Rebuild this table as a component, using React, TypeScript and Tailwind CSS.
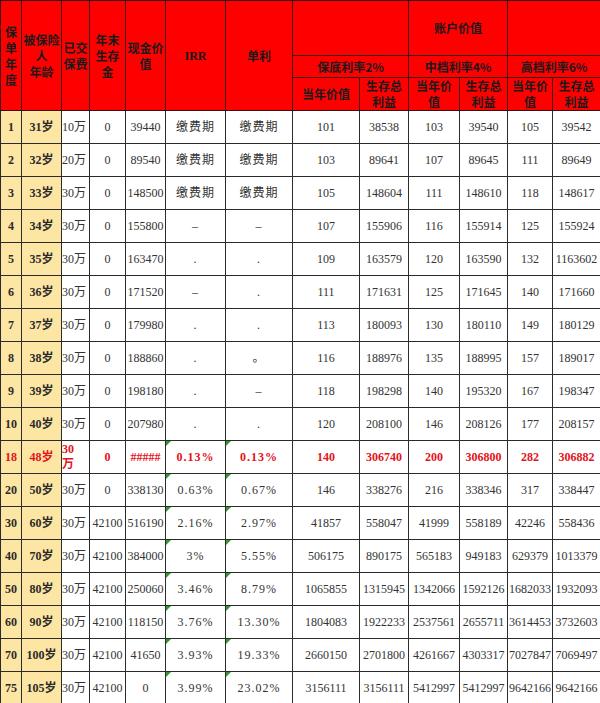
// App.tsx - 保单利益演示表

type Row = {
    year: string;
    age: string;
    paid: string;
    survival: string;
    cash: string;
    irr: string;
    simple: string;
    vals: string[];
    hot?: boolean;
    flag?: boolean;
};

const rows: Row[] = [
    { year: '1', age: '31岁', paid: '10万', survival: '0', cash: '39440', irr: '缴费期', simple: '缴费期', vals: ['101', '38538', '103', '39540', '105', '39542'] },
    { year: '2', age: '32岁', paid: '20万', survival: '0', cash: '89540', irr: '缴费期', simple: '缴费期', vals: ['103', '89641', '107', '89645', '111', '89649'] },
    { year: '3', age: '33岁', paid: '30万', survival: '0', cash: '148500', irr: '缴费期', simple: '缴费期', vals: ['105', '148604', '111', '148610', '118', '148617'] },
    { year: '4', age: '34岁', paid: '30万', survival: '0', cash: '155800', irr: '–', simple: '–', vals: ['107', '155906', '116', '155914', '125', '155924'] },
    { year: '5', age: '35岁', paid: '30万', survival: '0', cash: '163470', irr: '.', simple: '.', vals: ['109', '163579', '120', '163590', '132', '1163602'] },
    { year: '6', age: '36岁', paid: '30万', survival: '0', cash: '171520', irr: '–', simple: '.', vals: ['111', '171631', '125', '171645', '140', '171660'] },
    { year: '7', age: '37岁', paid: '30万', survival: '0', cash: '179980', irr: '.', simple: '.', vals: ['113', '180093', '130', '180110', '149', '180129'] },
    { year: '8', age: '38岁', paid: '30万', survival: '0', cash: '188860', irr: '.', simple: '。', vals: ['116', '188976', '135', '188995', '157', '189017'] },
    { year: '9', age: '39岁', paid: '30万', survival: '0', cash: '198180', irr: '.', simple: '–', vals: ['118', '198298', '140', '195320', '167', '198347'] },
    { year: '10', age: '40岁', paid: '30万', survival: '0', cash: '207980', irr: '.', simple: '.', vals: ['120', '208100', '146', '208126', '177', '208157'] },
    { year: '18', age: '48岁', paid: '30万', survival: '0', cash: '#####', irr: '0.13%', simple: '0.13%', vals: ['140', '306740', '200', '306800', '282', '306882'], hot: true, flag: true },
    { year: '20', age: '50岁', paid: '30万', survival: '0', cash: '338130', irr: '0.63%', simple: '0.67%', vals: ['146', '338276', '216', '338346', '317', '338447'], flag: true },
    { year: '30', age: '60岁', paid: '30万', survival: '42100', cash: '516190', irr: '2.16%', simple: '2.97%', vals: ['41857', '558047', '41999', '558189', '42246', '558436'], flag: true },
    { year: '40', age: '70岁', paid: '30万', survival: '42100', cash: '384000', irr: '3%', simple: '5.55%', vals: ['506175', '890175', '565183', '949183', '629379', '1013379'], flag: true },
    { year: '50', age: '80岁', paid: '30万', survival: '42100', cash: '250060', irr: '3.46%', simple: '8.79%', vals: ['1065855', '1315945', '1342066', '1592126', '1682033', '1932093'], flag: true },
    { year: '60', age: '90岁', paid: '30万', survival: '42100', cash: '118150', irr: '3.76%', simple: '13.30%', vals: ['1804083', '1922233', '2537561', '2655711', '3614453', '3732603'], flag: true },
    { year: '70', age: '100岁', paid: '30万', survival: '42100', cash: '41650', irr: '3.93%', simple: '19.33%', vals: ['2660150', '2701800', '4261667', '4303317', '7027847', '7069497'], flag: true },
    { year: '75', age: '105岁', paid: '30万', survival: '42100', cash: '0', irr: '3.99%', simple: '23.02%', vals: ['3156111', '3156111', '5412997', '5412997', '9642166', '9642166'], flag: true },
];

const widths = [21, 40, 28, 36, 40, 60, 67, 67, 49, 51, 48, 45, 48];

const th = 'border border-[#3a1010] bg-[#ff0000] text-[12px] font-bold leading-[16px] text-[#1a1a1a] text-center align-middle p-0';
const td = 'border border-[#2b2b2b] text-center align-middle p-0 whitespace-nowrap';

const Flag = () => (
    <span className="absolute left-0 top-0 w-0 h-0 border-t-[5px] border-t-[#2e9a2e] border-r-[5px] border-r-transparent" />
);

export default function App() {
    return (
        <div className="w-[600px] h-[703px] overflow-hidden bg-white">
            <table
                className="table-fixed border-collapse w-[600px] text-[12px] text-[#333]"
                style={{ fontFamily: '"Liberation Serif", "Noto Sans CJK SC", serif' }}
            >
                <colgroup>
                    {widths.map((w, i) => (
                        <col key={i} style={{ width: w }} />
                    ))}
                </colgroup>
                <thead style={{ fontFamily: '"Noto Sans CJK SC", "Liberation Serif", serif' }}>
                    <tr className="h-[55px]">
                        <th rowSpan={3} className={`${th} text-[11px]`}>
                            <div className="flex flex-col items-center leading-[16px]">
                                <span>保</span>
                                <span>单</span>
                                <span>年</span>
                                <span>度</span>
                            </div>
                        </th>
                        <th rowSpan={3} className={th}>
                            被保险<br />人<br />年龄
                        </th>
                        <th rowSpan={3} className={th}>
                            已交<br />保费
                        </th>
                        <th rowSpan={3} className={th}>
                            年末<br />生存<br />金
                        </th>
                        <th rowSpan={3} className={th}>
                            现金价<br />值
                        </th>
                        <th rowSpan={3} className={`${th} font-['Liberation_Serif',serif]`}>
                            IRR
                        </th>
                        <th rowSpan={3} className={th}>
                            单利
                        </th>
                        <th colSpan={2} className={th}></th>
                        <th colSpan={2} className={th}>
                            账户价值
                        </th>
                        <th colSpan={2} className={th}></th>
                    </tr>
                    <tr className="h-[22px]">
                        <th colSpan={2} className={th}>保底利率2%</th>
                        <th colSpan={2} className={th}>中档利率4%</th>
                        <th colSpan={2} className={th}>高档利率6%</th>
                    </tr>
                    <tr className="h-[32px]">
                        <th className={th}>当年价值</th>
                        <th className={th}>生存总<br />利益</th>
                        <th className={th}>当年价<br />值</th>
                        <th className={th}>生存总<br />利益</th>
                        <th className={th}>当年价<br />值</th>
                        <th className={th}>生存总<br />利益</th>
                    </tr>
                </thead>
                <tbody>
                    {rows.map((r) => {
                        const tone = r.hot ? 'text-[#e3131b] font-bold' : '';
                        return (
                            <tr key={r.year} className="h-[33px]">
                                <td className={`${td} bg-[#fde5a4] font-bold ${r.hot ? 'text-[#e3131b]' : 'text-[#2a2a2a]'}`}>
                                    {r.year}
                                </td>
                                <td className={`${td} bg-[#fde5a4] font-bold ${r.hot ? 'text-[#e3131b]' : 'text-[#2a2a2a]'}`}>
                                    {r.age}
                                </td>
                                <td className={`${td} text-left leading-[15px] ${tone}`}>
                                    {r.hot ? (
                                        <>
                                            30
                                            <br />万
                                        </>
                                    ) : (
                                        r.paid
                                    )}
                                </td>
                                <td className={`${td} ${tone}`}>{r.survival}</td>
                                <td className={`${td} ${tone}`}>{r.cash}</td>
                                <td className={`${td} relative tracking-[1px] ${tone}`}>
                                    {r.flag && <Flag />}
                                    {r.irr}
                                </td>
                                <td className={`${td} relative tracking-[1px] ${tone}`}>
                                    {r.flag && <Flag />}
                                    {r.simple}
                                </td>
                                {r.vals.map((v, i) => (
                                    <td key={i} className={`${td} ${tone}`}>
                                        {v}
                                    </td>
                                ))}
                            </tr>
                        );
                    })}
                </tbody>
            </table>
        </div>
    );
}
